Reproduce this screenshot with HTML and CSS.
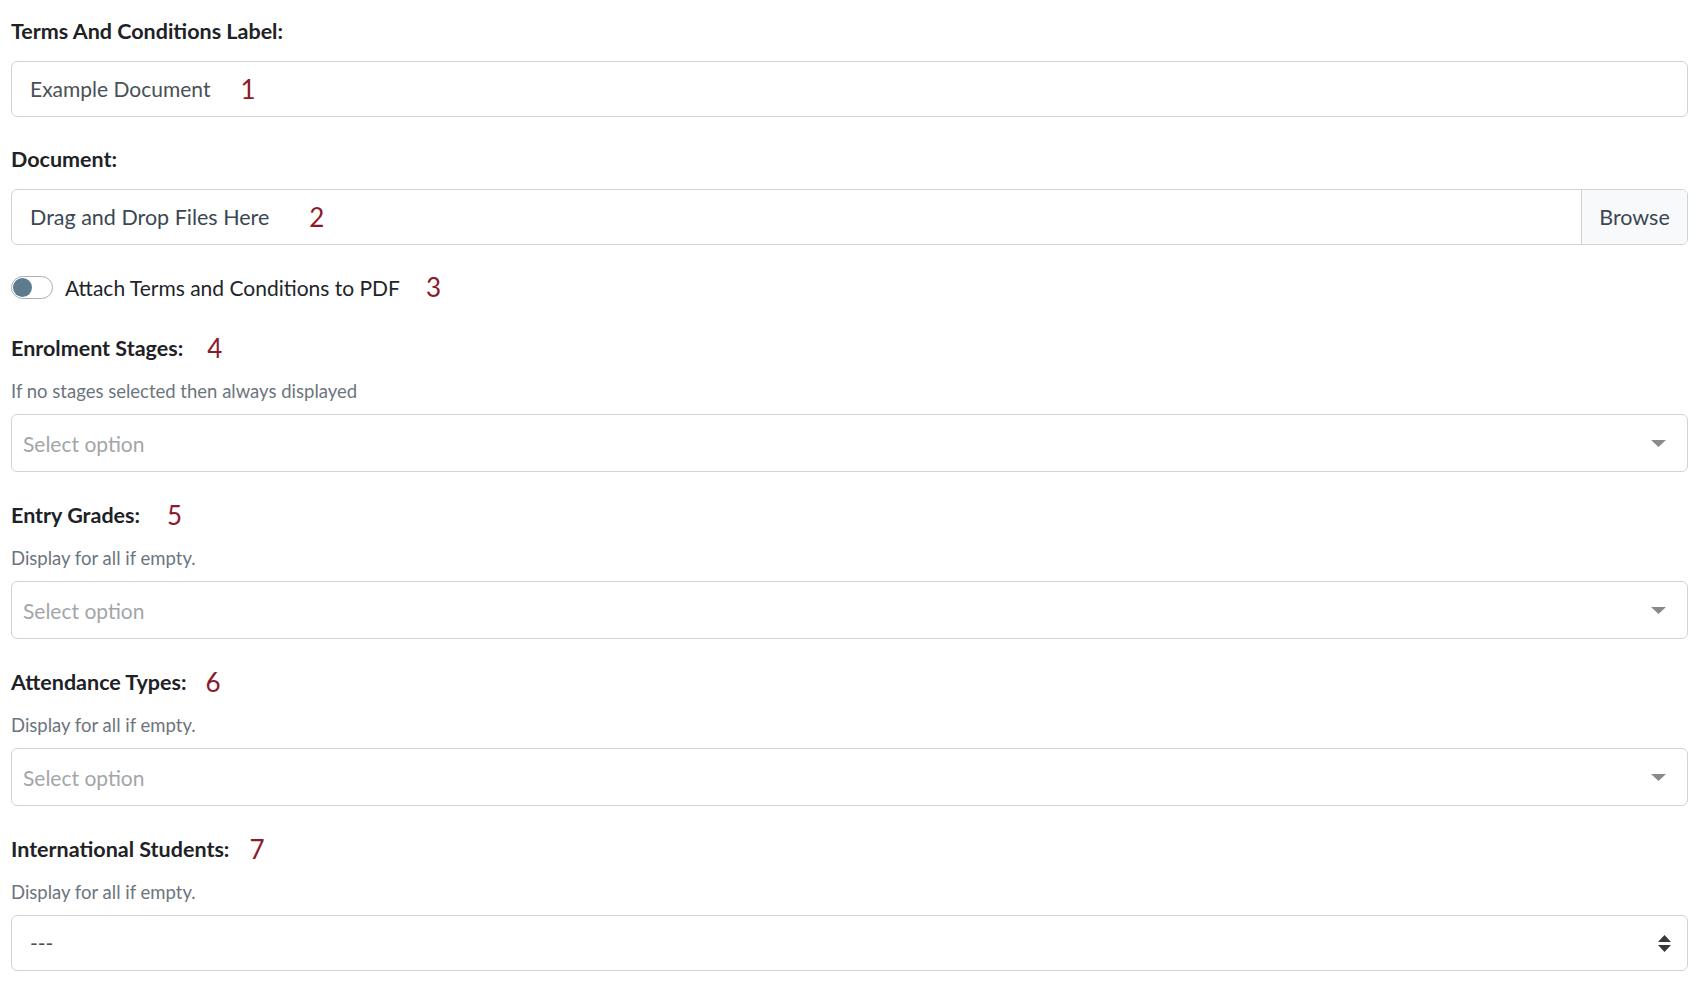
FILE: index.html
```html
<!DOCTYPE html>
<html lang="en">
<head>
<meta charset="utf-8">
<title>Terms and Conditions</title>
<link rel="stylesheet" href="styles.css">
</head>
<body>
<form class="form">
  <div class="group">
    <label class="label">Terms And Conditions Label:</label>
    <div class="input"><span class="value">Example Document</span><span class="num num-1">1</span></div>
  </div>

  <div class="group">
    <label class="label">Document:</label>
    <div class="file">
      <div class="file-drop"><span class="value drop-text">Drag and Drop Files Here</span><span class="num num-2">2</span></div>
      <div class="file-btn">Browse</div>
    </div>
  </div>

  <div class="group switch-row">
    <span class="switch"><span class="knob"></span></span>
    <span class="switch-text">Attach Terms and Conditions to PDF</span><span class="num num-3">3</span>
  </div>

  <div class="group">
    <label class="label">Enrolment Stages:<span class="num num-4">4</span></label>
    <div class="help">If no stages selected then always displayed</div>
    <div class="select"><span class="placeholder">Select option</span>
      <svg class="caret" width="15" height="7" viewBox="0 0 15 7"><path d="M0 0H15L7.5 7Z" fill="#8a8a8a"/></svg>
    </div>
  </div>

  <div class="group">
    <label class="label">Entry Grades:<span class="num num-5">5</span></label>
    <div class="help">Display for all if empty.</div>
    <div class="select"><span class="placeholder">Select option</span>
      <svg class="caret" width="15" height="7" viewBox="0 0 15 7"><path d="M0 0H15L7.5 7Z" fill="#8a8a8a"/></svg>
    </div>
  </div>

  <div class="group">
    <label class="label">Attendance Types:<span class="num num-6">6</span></label>
    <div class="help">Display for all if empty.</div>
    <div class="select"><span class="placeholder">Select option</span>
      <svg class="caret" width="15" height="7" viewBox="0 0 15 7"><path d="M0 0H15L7.5 7Z" fill="#8a8a8a"/></svg>
    </div>
  </div>

  <div class="group">
    <label class="label">International Students:<span class="num num-7">7</span></label>
    <div class="help">Display for all if empty.</div>
    <div class="native-select"><span class="value">---</span>
      <svg class="sort" width="13" height="17" viewBox="0 0 13 17"><path d="M6.5 0L13 7H0Z M0 10H13L6.5 17Z" fill="#343a40"/></svg>
    </div>
  </div>
</form>
</body>
</html>
```

FILE: styles.css
```css
* { box-sizing: border-box; }

body {
  margin: 0;
  background: #ffffff;
  font-family: Lato, "Open Sans", sans-serif;
  color: #212529;
}

.form {
  padding: 16px 10px 0 11px;
}

.group {
  margin-bottom: 27px;
}

.label {
  display: block;
  font-size: 21.5px;
  line-height: 30px;
  font-weight: 700;
  color: #1e2226;
  margin-bottom: 15px;
}

.group .help + .select,
.group .help + .native-select {
  margin-top: 9px;
}

.help {
  font-size: 18.5px;
  line-height: 27px;
  color: #6c757d;
}

.input,
.file,
.native-select {
  height: 56px;
  border: 1px solid #ced4da;
  border-radius: 6px;
  display: flex;
  align-items: center;
  font-size: 21px;
  color: #495057;
}

.input {
  padding-left: 18px;
}

.value {
  line-height: 30px;
}

.drop-text {
  font-size: 21.5px;
  color: #3b4753;
}

.num {
  font-size: 26px;
  line-height: 30px;
  color: #8b1a2d;
  font-weight: 400;
  vertical-align: -2px;
}

.num-1 { margin-left: 30px; }
.num-2 { margin-left: 40px; }
.num-3 { margin-left: 26px; }
.num-4 { margin-left: 24px; }
.num-5 { margin-left: 27px; }
.num-6 { margin-left: 19px; }
.num-7 { margin-left: 20px; }

.file {
  align-items: stretch;
  overflow: hidden;
}

.file-drop {
  flex: 1;
  display: flex;
  align-items: center;
  padding-left: 18px;
}

.file-btn {
  width: 106px;
  display: flex;
  align-items: center;
  justify-content: center;
  background: #f8f9fa;
  border-left: 1px solid #ced4da;
  color: #3b4753;
  font-size: 21.5px;
}

.switch-row {
  display: flex;
  align-items: center;
  height: 30px;
  margin-bottom: 31px;
  font-size: 21px;
  color: #212529;
}

.switch {
  width: 42px;
  height: 23px;
  border: 1px solid #a7b0b8;
  border-radius: 12px;
  display: flex;
  align-items: center;
  padding-left: 1px;
  margin-right: 12px;
  flex-shrink: 0;
}

.knob {
  width: 19px;
  height: 19px;
  border-radius: 50%;
  background: #5d7a8e;
}

.select {
  height: 58px;
  border: 1px solid #ced4da;
  border-radius: 6px;
  display: flex;
  align-items: center;
  justify-content: space-between;
  padding: 0 21px 0 11px;
  font-size: 21px;
}

.group:has(.select) {
  margin-bottom: 28px;
}

.placeholder {
  color: #a3a6a9;
}

.native-select {
  justify-content: space-between;
  padding: 0 16px 0 18px;
}
```
